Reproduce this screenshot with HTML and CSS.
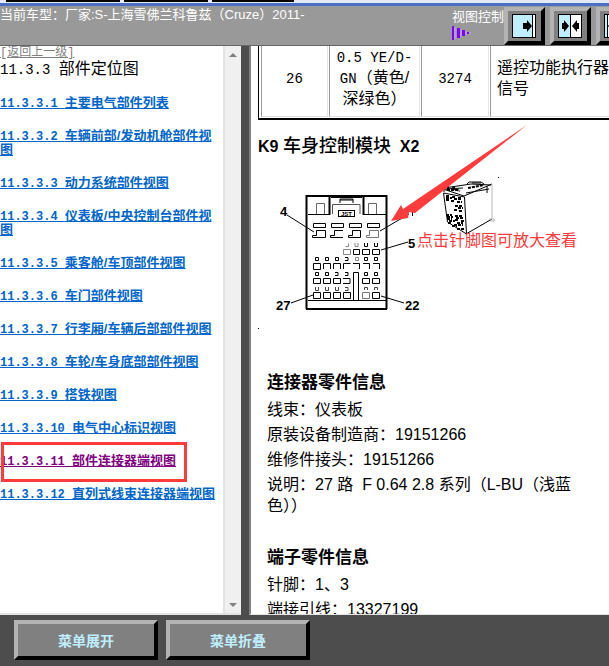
FILE: index.html
```
<!DOCTYPE html>
<html lang="zh-CN">
<head>
  <meta charset="UTF-8" />
  <meta name="viewport" content="width=device-width, initial-scale=1" />
  <title>11.3.3 部件定位图</title>
  <link rel="stylesheet" href="styles.css">
</head>
<body>
  <div class="tabs"><span></span><span></span><span></span></div>

  <header class="top-bar">
    <div class="car">当前车型：厂家:S-上海雪佛兰科鲁兹（Cruze）2011-</div>
    <div class="view-control">
      <div class="view-label">
        <span>视图控制</span>
        <svg width="20" height="16" viewBox="0 0 20 16">
          <path d="M0 1h2v14H0z M5 3h3v10H5z M10 5h3v6h-3z M15 7h2v2h-2z" fill="#8000ff"/>
          <path d="M3 2v12 M9 4v8 M14 6v4 M17 8h2" stroke="#c9a6e8" fill="none"/>
        </svg>
      </div>
      <button class="view-btn" type="button" aria-label="展开左侧">
        <svg width="24" height="24" viewBox="0 0 24 24">
          <rect x="0.5" y="0.5" width="23" height="23" fill="#fff" stroke="#000"/>
          <path d="M1 1h19v22H1z" fill="#bfefff"/>
          <path d="M20.5 1v22" stroke="#000"/>
          <path d="M11 9h4V6l5 6-5 6v-3h-4z"/>
        </svg>
      </button>
      <button class="view-btn" type="button" aria-label="左右均分">
        <svg width="24" height="24" viewBox="0 0 24 24">
          <rect x="0.5" y="0.5" width="23" height="23" fill="#fff" stroke="#000"/>
          <path d="M1 1h11v22H1z" fill="#bfefff"/>
          <path d="M12.5 1v22" stroke="#000"/>
          <path d="M4 9h2V6l5 6-5 6v-3H4z M21 9h-2V6l-5 6 5 6v-3h2z"/>
        </svg>
      </button>
      <button class="view-btn" type="button" aria-label="展开右侧">
        <svg width="24" height="24" viewBox="0 0 24 24">
          <rect x="0.5" y="0.5" width="23" height="23" fill="#fff" stroke="#000"/>
          <path d="M1 1h2v22H1z" fill="#bfefff"/>
          <path d="M3.5 1v22" stroke="#000"/>
          <path d="M13 9H9V6l-5 6 5 6v-3h4z"/>
        </svg>
      </button>
    </div>
  </header>

  <main class="frames">
    <section class="menu-frame">
      <nav class="menu" aria-label="目录">
        <a class="back" href="#">[返回上一级]</a>
        <h1><span class="num">11.3.3 </span>部件定位图</h1>
        <ul>
          <li><a href="#"><span class="num">11.3.3.1 </span>主要电气部件列表</a></li>
          <li><a href="#"><span class="num">11.3.3.2 </span>车辆前部/发动机舱部件视图</a></li>
          <li><a href="#"><span class="num">11.3.3.3 </span>动力系统部件视图</a></li>
          <li><a href="#"><span class="num">11.3.3.4 </span>仪表板/中央控制台部件视图</a></li>
          <li><a href="#"><span class="num">11.3.3.5 </span>乘客舱/车顶部件视图</a></li>
          <li><a href="#"><span class="num">11.3.3.6 </span>车门部件视图</a></li>
          <li><a href="#"><span class="num">11.3.3.7 </span>行李厢/车辆后部部件视图</a></li>
          <li><a href="#"><span class="num">11.3.3.8 </span>车轮/车身底部部件视图</a></li>
          <li><a href="#"><span class="num">11.3.3.9 </span>搭铁视图</a></li>
          <li><a href="#"><span class="num">11.3.3.10 </span>电气中心标识视图</a></li>
          <li class="current"><a href="#" aria-current="page"><span class="num">11.3.3.11 </span>部件连接器端视图</a></li>
          <li><a href="#"><span class="num">11.3.3.12 </span>直列式线束连接器端视图</a></li>
        </ul>
      </nav>
      <div class="scrollbar">
        <svg width="8" height="4" viewBox="0 0 8 4"><path d="M0 4l4-4 4 4z" fill="#808080"/></svg>
        <svg width="8" height="4" viewBox="0 0 8 4"><path d="M0 0l4 4 4-4z" fill="#808080"/></svg>
      </div>
    </section>

    <section class="content">
      <table class="pins">
        <tr>
          <td class="pin"><span class="mono">26</span></td>
          <td class="wire"><span class="mono">0.5 YE/D-<br>GN</span>（黄色/<br>深绿色）</td>
          <td class="circuit"><span class="mono">3274</span></td>
          <td class="func">遥控功能执行器<br>信号</td>
        </tr>
      </table>

      <h2>K9 <span>车身控制模块</span>&nbsp; X2</h2>

      <figure class="connector">
        <svg class="drawing" width="351" height="200" viewBox="258 160 351 200" fill="none" stroke="#000">
          <!-- housing -->
          <path d="M306 196h81M306.500 195v114M386.500 195v114M306 309h81" stroke-width="2"/>
          <path d="M308 300.500h78M308 214.500h21M364 214.500h22"/>
          <path d="M329.500 196v19M363.500 196v19" stroke-width="2"/>
          <path d="M331 197.500h31M340 203v-4h13v4M340 200h13"/>
          <path d="M332.500 214v-9.500h27.500v9.500" stroke="#555"/>
          <path d="M316.500 214v-10.500h8v10.500M368.500 214v-10.500h8v10.500" stroke="#666"/>
          <rect x="338.500" y="210.500" width="16" height="6"/>
          <!-- large terminals -->
          <path d="M313.500 223.500h12v4h-12zM331.500 223.500h12v4h-12zM349.500 223.500h12v4h-12zM367.500 223.500h12v4h-12z"/>
          <path d="M316.500 230.500h9v7h-13v-2h4zM343 230.500h-8.500v5h-4v2h12.500M352.500 230.500h8v7h-12v-2h4z"/>
          <path d="M369.500 230.500h9v7h-12v-2h3z" stroke="#777"/>
          <!-- small terminals -->
          <path d="M345.500 246.500h3v-3M355 243v3.500h3v-3.500" stroke="#888"/>
          <path d="M364.500 243v3.500h3v-3.500M374.500 243v3.500h3v-3.500"/>
          <path d="M343.500 249.500h7v5h-7z" stroke="#888"/>
          <path d="M353.500 249.500h6v5h-6zM362.500 249.500h7v5h-7zM372.500 249.500h7v5h-7z"/>
          <path d="M315.500 257.500h3v3h-3zM325.500 257.500h3v3h-3zM335.500 257.500h3v3h-3zM345 257.500h3v3h-3M364.500 257.500h3v3h-3zM374.500 257.500h3v3h-3z"/>
          <path d="M355.500 257.500h3v3h-3z" stroke="#888"/>
          <path d="M313.500 263.500h7v6h-7zM323.500 269v-5.500h7v5.500M333.500 269v-5.500h7v5.500M343.500 269v-5.500h7M353 263.500h6.500v5.500M363 263.500h6.500v5.500M373 263.500h6.500v5.500"/>
          <path d="M315.500 272.500h3v3h-3zM325.500 272.500h3v3h-3zM335 272.500h3v3h-3M345 272.500h3v3h-3M364.500 272.500h3v3h-3zM374.500 272.500h3v3h-3z"/>
          <path d="M313.500 278.500h7v5h-7zM323.500 278.500h7v5h-7zM333.500 278.500h7v5h-7zM343 278.500h7v5h-7M362.500 278.500h7v5h-7zM372.500 278.500h7v5h-7z"/>
          <path d="M315.500 287v3.500h3v-3.500M325.500 287v3.500h3v-3.500M335.500 287v3.500h3v-3.500M345 287.500h3v3h-3M364.500 290v-2.500h3v2.500M374.500 290v-2.500h3v2.500" stroke="#444"/>
          <path d="M313.500 292.500h7v6h-7zM323.500 292.500h7v6h-7zM333.500 292.500h7v6h-7zM343.500 292.500h7v6h-7zM372.500 292.500h7v6h-7z"/>
          <path d="M362.500 292.500h7v6h-7z" stroke="#777"/>
          <path d="M353.500 300v-27.500h5v27.500"/>
          <!-- leader lines -->
          <path d="M287 215l27 17M380 231l29-17M381 250l27-8M291 303l22-8M381 296l23 7M412.500 210v6"/>
          <!-- perspective view -->
          <path d="M443.500 193l21 4 2 37-19-12-4-29zM443 189l21 7 28-12M444 192v-4l27-4 20 1M445 189l18-1M466 193l23-4M467 184l2-2h12l3 2M472 183h9M487 186v7M466 234l26-15"/>
          <path d="M492 184v34M489 219h5v2h-4" stroke="#bbb"/>
          <path d="M446 196h4M452 197h4M458 198h4M446 200h3M451 201h4M457 202h5M455 206h7M454 210h3M459 211h4M446 215h6M455 216h8M447 219h5M455 220h4M461 221h3M448 223h4M454 225h9M457 229h7M447 190h12M452 188l8 3M448 186v5M454 187v4M468 188l16-3M446 198h6M454 199h8M458 208h5M447 217h6M456 218h7M449 221h6M457 223h6M452 226h5" stroke-width="2" stroke-dasharray="3 1"/>
          <path d="M498 177.500h1M258 328.500h1"/>
          <g class="labels">
            <text x="280" y="216">4</text>
            <text x="408" y="248">5</text>
            <text x="276" y="310">27</text>
            <text x="405" y="310">22</text>
            <text class="jst" x="341" y="216">JST</text>
          </g>
          <path d="M391 221l10-16 2 4L527 125 415 213l-6-1 -1 6z" fill="#ff3b3b" stroke="none"/>
        </svg>
        <figcaption>点击针脚图可放大查看</figcaption>
      </figure>

      <div class="info">
        <h3>连接器零件信息</h3>
        <p>线束：仪表板</p>
        <p>原装设备制造商：19151266</p>
        <p>维修件接头：19151266</p>
        <p>说明：27 路&nbsp; F 0.64 2.8 系列（L-BU（浅蓝色））</p>
      </div>
      <div class="info">
        <h3>端子零件信息</h3>
        <p>针脚：1、3</p>
        <p>端接引线：13327199</p>
      </div>
    </section>
  </main>

  <footer class="bottom-bar">
    <button type="button">菜单展开</button>
    <button type="button">菜单折叠</button>
  </footer>
</body>
</html>
```
FILE: styles.css
```
* {
  box-sizing: border-box;
}
body {
  margin: 0;
  height: 100vh;
  display: flex;
  flex-direction: column;
  overflow: hidden;
  background: #4d4d4d;
  color: #000;
  font-family: 'Liberation Sans', 'Noto Sans CJK SC', sans-serif;
  font-size: 16px;
}
h1, h2, h3, p, ul, figure {
  margin: 0;
  padding: 0;
}
svg {
  display: block;
}
button {
  font-family: inherit;
  cursor: pointer;
}

/* Top */
.tabs {
  flex: none;
  height: 6px;
  display: flex;
  gap: 4px;
  padding-left: 6px;
  background: #e4e9f5;
  border-bottom: 3px solid #4a6fc4;
}
.tabs span {
  width: 114px;
  height: 2px;
  background: #000;
}
.tabs span:nth-child(2) {
  width: 84px;
}
.tabs span:nth-child(3) {
  width: 82px;
}
.top-bar {
  flex: none;
  height: 40px;
  display: flex;
  justify-content: space-between;
  background: #999;
  border-bottom: 1px solid #666;
  color: #fff;
  font-size: 13px;
  line-height: 16px;
  overflow: hidden;
}
.car {
  padding-top: 1px;
  white-space: nowrap;
}
.view-control {
  display: flex;
  gap: 5px;
  margin-right: -28px;
  white-space: nowrap;
}
.view-label {
  padding-top: 3px;
  margin-right: -5px;
}
.view-btn {
  flex: none;
  width: 41px;
  height: 38px;
  margin-top: 1px;
  padding: 3px 4px;
  background: #808080;
  border: 4px solid;
  border-color: #b3b3b3 #000 #000 #b3b3b3;
}

/* Frames */
.frames {
  flex: 1;
  min-height: 0;
  display: flex;
  gap: 8px;
}
.menu-frame {
  flex: none;
  width: 241px;
  display: flex;
  background: #fff;
  border-bottom: 2px solid #e3e3e3;
}
.menu {
  flex: 1;
  overflow: hidden;
}
.num, .mono, .back {
  font-family: 'Liberation Mono', 'Noto Sans CJK SC', monospace;
}
.num, .mono {
  line-height: 1;
}
.back {
  display: block;
  width: max-content;
  color: #808080;
  font-size: 12px;
  line-height: 14px;
}
.menu h1 {
  font-size: 16px;
  font-weight: normal;
  line-height: 18px;
}
.menu h1 .num {
  font-size: 14px;
}
.menu ul {
  list-style: none;
  padding-top: 18px;
  font-size: 13px;
  font-weight: bold;
  line-height: 14px;
}
.menu li {
  margin-bottom: 19px;
  word-break: break-all;
}
.menu li a {
  color: #0066cc;
}
.menu li .num {
  font-size: 12px;
}
.menu .current {
  position: relative;
}
.menu .current a {
  color: #800080;
}
.menu .current::after {
  content: '';
  position: absolute;
  inset: -12px 36px -14px 1px;
  border: 3px solid #ff3b3b;
}
.scrollbar {
  width: 18px;
  display: flex;
  flex-direction: column;
  justify-content: space-between;
  align-items: center;
  padding: 7px 0 6px;
  background: #f0f0f0;
  border-left: 2px solid #e3e3e3;
}
.content {
  flex: 1;
  min-width: 0;
  overflow: hidden;
  padding-left: 7px;
  background: #fff;
  border-left: 2px solid #808080;
  border-bottom: 1px solid #e3e3e3;
}

/* Pin table */
.pins {
  width: 400px;
  table-layout: fixed;
  border: solid #000;
  border-width: 0 1px 2px 1px;
  border-spacing: 1px 0;
  padding: 0 1px 1px;
  line-height: 21px;
}
.pins td {
  padding: 0 4px 7px;
  border: 1px solid #e3e3e3;
  border-top: none;
  border-left-color: #999;
  text-align: center;
}
.pins .pin {
  width: 67px;
}
.pins .wire {
  width: 91px;
  white-space: nowrap;
}
.pins .circuit {
  width: 68px;
}
.pins .func {
  padding-left: 6px;
  text-align: left;
}
.mono {
  font-size: 14px;
}

h2 {
  margin-top: 17px;
  font-size: 16px;
  line-height: 20px;
}
h2 span {
  font-size: 18px;
  font-weight: 500;
  line-height: 1;
}
.connector {
  position: relative;
  margin: 3px 0 11px;
}
.drawing {
  overflow: visible;
}
.labels {
  fill: #000;
  stroke: none;
  font-size: 13px;
  font-weight: bold;
}
.labels .jst {
  font-size: 6px;
}
.connector figcaption {
  position: absolute;
  left: 159px;
  top: 71px;
  line-height: 20px;
  white-space: nowrap;
  color: #ff3b3b;
}

.info {
  padding: 0 36px 0 9px;
  margin-bottom: 30px;
}
.info h3 {
  font-size: 17px;
  line-height: 24px;
}
.info p {
  margin-top: 4px;
  line-height: 21px;
}

/* Bottom */
.bottom-bar {
  flex: none;
  display: flex;
  gap: 8px;
  padding: 5px 14px 6px;
}
.bottom-bar button {
  width: 144px;
  height: 40px;
  background: #808080;
  border: 4px solid;
  border-color: #b3b3b3 #000 #000 #b3b3b3;
  color: #bfefff;
  font-size: 14px;
  font-weight: bold;
}
```
